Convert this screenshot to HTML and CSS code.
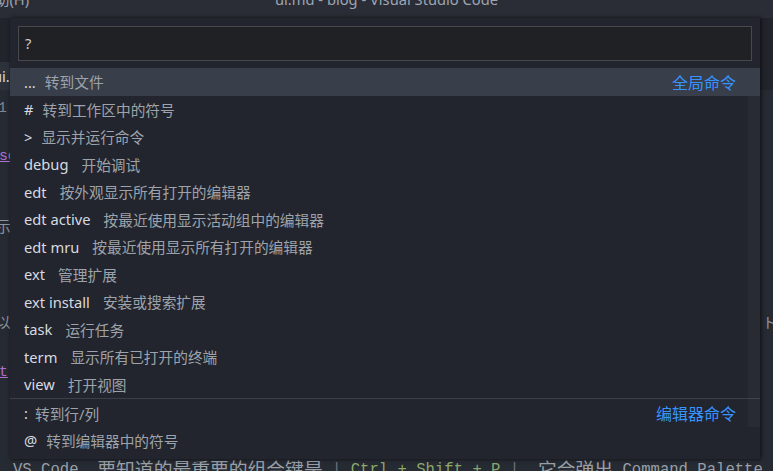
FILE: index.html
```html
<!DOCTYPE html>
<html lang="zh-CN">
<head>
    <meta charset="UTF-8">
    <meta name="viewport" content="width=device-width, initial-scale=1.0">
    <title>ui.md - blog - Visual Studio Code</title>
    <link rel="stylesheet" href="styles.css">
</head>
<body>
    <div class="titlebar">
        <span class="menu">帮助(H)</span>
        <span class="title">ui.md - blog - Visual Studio Code</span>
        <span></span>
    </div>

    <div class="workbench">
        <div class="tabs-top"></div>
        <div class="tabs">
            <div class="tab">ui.md</div>
        </div>
        <div class="editor">
            <div class="line"><span class="lineno">1</span></div>
            <div class="line"></div>
            <div class="line"><span class="link">sec</span></div>
            <div class="line"></div>
            <div class="line"></div>
            <div class="line"><span class="peek">示</span></div>
            <div class="line"></div>
            <div class="line"></div>
            <div class="line"></div>
            <div class="line split"><span class="peek">以</span><span class="tail"><span class="paren">(</span>ト</span></div>
            <div class="line"></div>
            <div class="line"><span class="link short">t</span></div>
            <div class="line"></div>
            <div class="line"></div>
            <div class="line"></div>
            <div class="line text">VS Code<span class="cjk">。要知道的最重要的组合键是</span> <span class="mark">|</span> <span class="key">Ctrl + Shift + P</span> <span class="mark">|</span><span class="cjk">，它会弹出</span> Command Palette</div>
        </div>
    </div>

    <div class="quick-input">
        <div class="qi-header">
            <div class="qi-box">?</div>
        </div>
        <div class="qi-list">
            <div class="row active"><span class="label">...</span><span class="desc sym">转到文件</span><span class="group">全局命令</span></div>
            <div class="row"><span class="label">#</span><span class="desc sym">转到工作区中的符号</span></div>
            <div class="row"><span class="label">&gt;</span><span class="desc sym">显示并运行命令</span></div>
            <div class="row"><span class="label">debug</span><span class="desc">开始调试</span></div>
            <div class="row"><span class="label">edt</span><span class="desc">按外观显示所有打开的编辑器</span></div>
            <div class="row"><span class="label">edt active</span><span class="desc">按最近使用显示活动组中的编辑器</span></div>
            <div class="row"><span class="label">edt mru</span><span class="desc">按最近使用显示所有打开的编辑器</span></div>
            <div class="row"><span class="label">ext</span><span class="desc">管理扩展</span></div>
            <div class="row"><span class="label">ext install</span><span class="desc">安装或搜索扩展</span></div>
            <div class="row"><span class="label">task</span><span class="desc">运行任务</span></div>
            <div class="row"><span class="label">term</span><span class="desc">显示所有已打开的终端</span></div>
            <div class="row"><span class="label">view</span><span class="desc">打开视图</span></div>
            <div class="row separated"><span class="label">:</span><span class="desc sym-tight">转到行/列</span><span class="group">编辑器命令</span></div>
            <div class="row"><span class="label">@</span><span class="desc sym">转到编辑器中的符号</span></div>
            <div class="scrollbar"></div>
        </div>
    </div>
</body>
</html>
```

FILE: styles.css
```css
body {
    margin: 0;
    width: 773px;
    height: 471px;
    overflow: hidden;
    background: #262a32;
    font-family: 'Noto Sans', 'Noto Sans CJK SC', sans-serif;
    font-size: 14.7px;
    color: #d7dae0;
}
.titlebar {
    height: 18px;
    display: grid;
    grid-template-columns: 1fr auto 1fr;
    background: #2a2d35;
    overflow: hidden;
    color: #9da5b4;
    line-height: 18px;
}
.menu {
    margin-left: -20px;
    margin-top: -10px;
}
.title {
    margin-top: -10px;
}
.workbench {
    height: 453px;
    overflow: hidden;
}
.tabs-top {
    height: 44px;
    background: #21242b;
}
.tabs {
    height: 28px;
    display: flex;
    background: #21242b;
}
.tab {
    background: #2d313a;
    padding: 0 20px 0 0;
    margin-left: -7px;
    line-height: 28px;
    color: #d7dae0;
}
.editor {
    padding-top: 6px;
    background: #262a32;
}
.line {
    height: 24px;
    line-height: 24px;
    white-space: nowrap;
    font-family: 'Liberation Mono', 'Noto Sans CJK SC', monospace;
    font-size: 14.7px;
    color: #9aa0a8;
}
.lineno {
    margin-left: -2px;
    color: #7f8794;
}
.link {
    color: #b26fd6;
    text-decoration: underline;
    margin-left: -1px;
}
.peek {
    margin-left: -4px;
    color: #8d939c;
}
.split {
    display: flex;
    justify-content: space-between;
}
.tail {
    margin-right: -4px;
    color: #8d939c;
}
.paren {
    color: #d19a30;
    margin-right: 2px;
}
.text {
    padding-left: 13px;
    padding-top: 2px;
    font-size: 15.6px;
}
.cjk {
    font-size: 18.8px;
    vertical-align: -3px;
}
.mark {
    color: #6b717b;
}
.key {
    color: #8ba86a;
}
.quick-input {
    position: absolute;
    top: 18px;
    left: 10px;
    width: 750px;
    height: 441px;
    background: #22252d;
    box-shadow: 1px 0 4px rgba(0, 0, 0, 0.7);
}
.qi-header {
    padding: 8px 8px 7px;
}
.qi-box {
    height: 35px;
    box-sizing: border-box;
    border: 1px solid #47494e;
    background: #202125;
    padding-left: 6px;
    line-height: 33px;
    color: #cccccc;
}
.qi-list {
    position: relative;
}
.row {
    height: 27.5px;
    display: flex;
    align-items: center;
    padding: 0 24px 0 14px;
    white-space: nowrap;
}
.row.active {
    background: #383e4a;
}
.row.separated {
    border-top: 1px solid #3c3f46;
    box-sizing: border-box;
    height: 28.5px;
    padding-top: 1px;
}
.label {
    color: #d7dae0;
}
.desc {
    margin-left: 13px;
    color: #9ea3ab;
}
.desc.sym {
    margin-left: 9px;
}
.desc.sym-tight {
    margin-left: 7px;
}
.group {
    margin-left: auto;
    font-size: 16px;
    color: #3794ff;
}
.scrollbar {
    position: absolute;
    top: 28px;
    right: 0;
    width: 12px;
    height: 331px;
    background: rgba(121, 121, 121, 0.08);
}
```
